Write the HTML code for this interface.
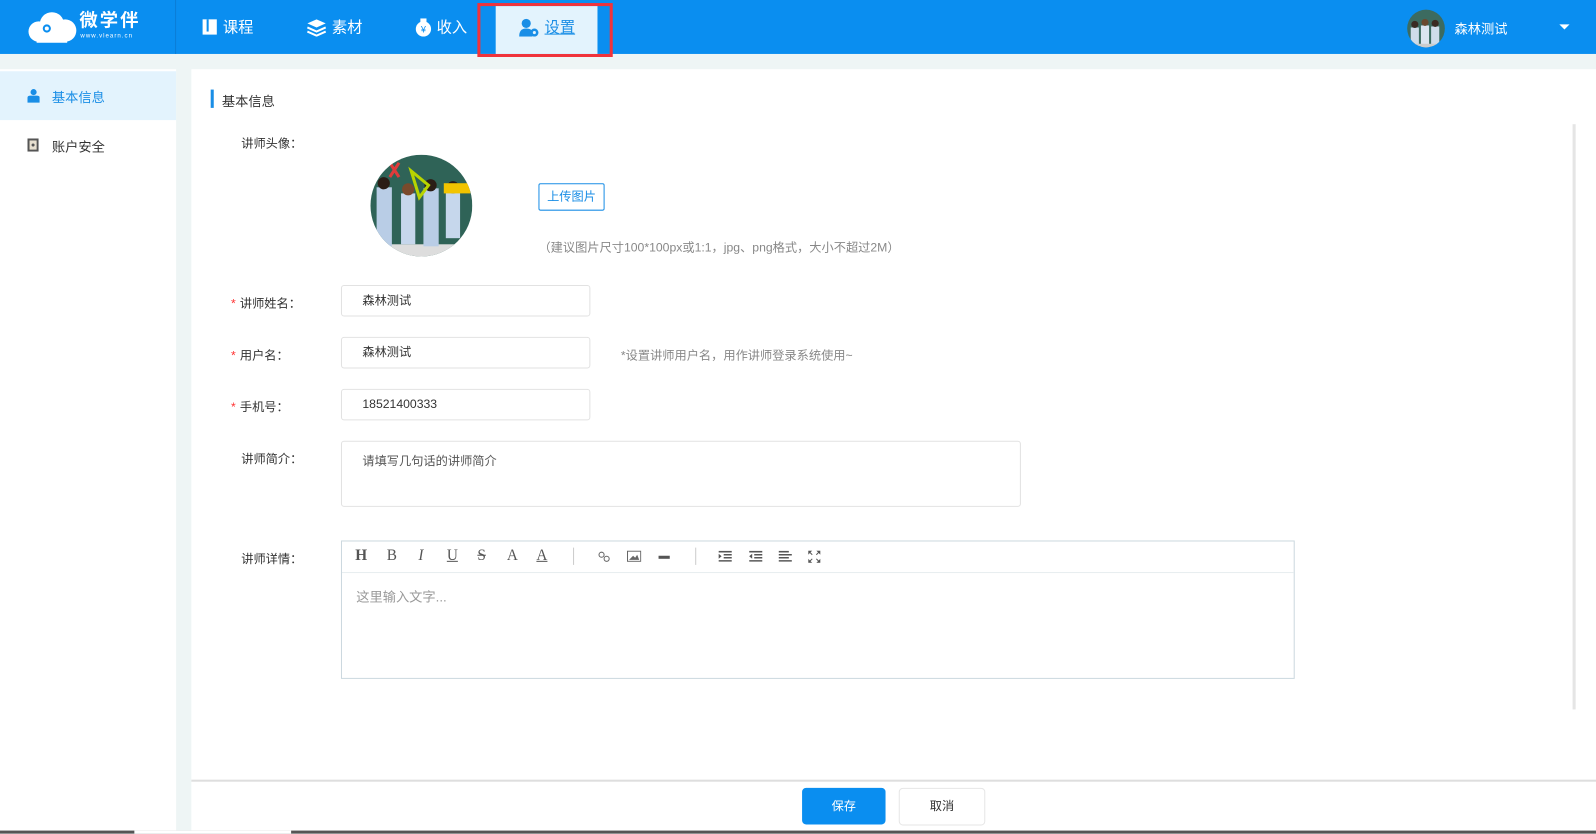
<!DOCTYPE html>
<html><head><meta charset="utf-8"><style>
*{margin:0;padding:0;box-sizing:border-box}
html,body{width:1596px;height:833px;overflow:hidden}
body{background:#eef5f5;font-family:"Liberation Sans","Noto Sans CJK SC",sans-serif;font-size:12px;color:#333}
#w{position:absolute;left:0;top:0;width:1568px;height:819px;transform:scale(1.017857);transform-origin:0 0}
.hdr{position:absolute;left:0;top:0;width:1568px;height:53px;background:#0a8ef0;color:#fff}
.abs{position:absolute}
.nav{position:absolute;top:0;height:53px;display:flex;align-items:center;font-size:15px;color:#fff}
.side{position:absolute;left:0;top:68px;width:173px;height:751px;background:#fff}
.main{position:absolute;left:188px;top:68px;width:1380px;height:751px;background:#fff}
.lbl{position:absolute;font-size:12px;color:#333}
.star{color:#f33;margin-right:4px}
.inp{position:absolute;border:1px solid #e2e2e2;border-radius:3px;background:#fff;padding-left:20px;font-size:12px;color:#333}
.tb{position:absolute;font-family:"Liberation Serif",serif;font-size:15px;color:#555}
</style></head><body><div id="w">
<div class="hdr">
 <svg class="abs" style="left:26px;top:11px" width="50" height="32" viewBox="0 0 50 32"><circle cx="12" cy="20" r="10" fill="#fff"/><circle cx="25" cy="13" r="12" fill="#fff"/><circle cx="38" cy="19" r="11" fill="#fff"/><rect x="10" y="20" width="30" height="11" fill="#fff"/><circle cx="20" cy="17" r="4" fill="#0a8ef0"/><circle cx="20" cy="17" r="2" fill="#fff"/></svg>
 <div class="abs" style="left:78px;top:9px;font-size:18px;font-weight:bold;letter-spacing:2px;line-height:22px">微学伴</div>
 <div class="abs" style="left:79px;top:33px;font-size:6px;letter-spacing:1px;line-height:7px">www.vlearn.cn</div>
 <div class="abs" style="left:172px;top:0;width:1px;height:53px;background:#0b7dd6"></div>
 <div class="nav" style="left:199px"><svg width="16" height="17"><rect x="0" y="1" width="14" height="15" fill="#fff"/><rect x="4" y="1" width="2" height="12" fill="#0a8ef0"/></svg><span style="margin-left:4px">课程</span></div>
 <div class="nav" style="left:301px"><svg width="20" height="18"><path d="M10 1 L19 5 L10 9 L1 5Z" fill="#fff"/><path d="M1 9 L10 13 L19 9" stroke="#fff" stroke-width="2" fill="none"/><path d="M1 13 L10 17 L19 13" stroke="#fff" stroke-width="2" fill="none"/></svg><span style="margin-left:5px">素材</span></div>
 <div class="nav" style="left:407px"><svg width="18" height="18"><circle cx="9" cy="10.5" r="7.5" fill="#fff"/><rect x="6" y="0" width="6" height="4" fill="#fff"/><text x="9" y="14" font-size="9" text-anchor="middle" fill="#0a8ef0">¥</text></svg><span style="margin-left:4px">收入</span></div>
 <div class="abs" style="left:469px;top:3px;width:133px;height:53px;border:3px solid #f0333b"></div>
 <div class="abs" style="left:487px;top:6px;width:100px;height:47px;background:#e3f3fd"></div>
 <div class="nav" style="left:510px;color:#1a8ee6"><svg width="20" height="18"><circle cx="7" cy="5" r="4.5" fill="#1a8ee6"/><path d="M0 18 Q0 10 7 10 Q12 10 13 13 L13 18Z" fill="#1a8ee6"/><circle cx="15" cy="14" r="4" fill="#1a8ee6"/><circle cx="15" cy="14" r="1.5" fill="#e3f3fd"/></svg><span style="margin-left:5px;text-decoration:underline">设置</span></div>
 <svg class="abs" style="left:1382px;top:9px" width="38" height="38"><defs><clipPath id="c1"><circle cx="19" cy="19" r="18.5"/></clipPath></defs><g clip-path="url(#c1)"><rect width="38" height="38" fill="#3c6b60"/><rect x="4" y="18" width="8" height="20" fill="#cfdcea"/><rect x="14" y="16" width="8" height="22" fill="#dbe5f0"/><rect x="24" y="17" width="8" height="21" fill="#cfdcea"/><circle cx="8" cy="15" r="3.5" fill="#3a2a22"/><circle cx="18" cy="13" r="3.5" fill="#6a4a30"/><circle cx="28" cy="14" r="3.5" fill="#3a2a22"/><rect x="0" y="34" width="38" height="4" fill="#ccc"/></g></svg>
 <div class="abs" style="left:1429px;top:18px;font-size:13px">森林测试</div>
 <div class="abs" style="left:1532px;top:24px;width:0;height:0;border-left:5px solid transparent;border-right:5px solid transparent;border-top:5px solid #fff"></div>
 <div class="abs" style="left:1580px;top:0;width:1px;height:50px;background:#0b7dd6"></div>
</div>
<div class="side">
 <div class="abs" style="left:0;top:2px;width:173px;height:48px;background:#e3f3fd"></div>
 <svg class="abs" style="left:27px;top:19px" width="12" height="14"><circle cx="6" cy="3.5" r="3" fill="#1a8ee6"/><path d="M0 14 L0 9 Q0 7 3 7 L9 7 Q12 7 12 9 L12 14Z" fill="#1a8ee6"/></svg>
 <div class="abs" style="left:51px;top:17px;font-size:13px;color:#1a8ee6">基本信息</div>
 <svg class="abs" style="left:27px;top:68px" width="11" height="13"><rect width="11" height="13" fill="#555"/><rect x="2" y="2" width="7" height="9" fill="#e8e0d0"/><circle cx="5.5" cy="6.5" r="1.5" fill="#555"/></svg>
 <div class="abs" style="left:51px;top:66px;font-size:13px;color:#333">账户安全</div>
</div>
<div class="main">
 <div class="abs" style="left:19px;top:20px;width:3px;height:18px;background:#1a8ee6"></div>
 <div class="abs" style="left:30px;top:21px;font-size:13px;color:#333">基本信息</div>
 <div class="abs" style="left:1357px;top:54px;width:3px;height:575px;background:#e5e5e5"></div>
 <div class="lbl" style="left:49px;top:64px">讲师头像：</div>
 <svg class="abs" style="left:176px;top:84px" width="100" height="100"><defs><clipPath id="c2"><circle cx="50" cy="50" r="50"/></clipPath></defs><g clip-path="url(#c2)"><rect width="100" height="100" fill="#2f6357"/><rect y="88" width="100" height="12" fill="#ddd"/><rect x="6" y="32" width="15" height="58" fill="#b9cde6"/><rect x="30" y="38" width="14" height="50" fill="#c6d7ec"/><rect x="52" y="33" width="15" height="57" fill="#b9cde6"/><rect x="74" y="36" width="14" height="46" fill="#c6d7ec"/><circle cx="13" cy="28" r="6" fill="#2b1d16"/><circle cx="37" cy="34" r="6" fill="#7a4a2c"/><circle cx="59" cy="30" r="6" fill="#2b1d16"/><circle cx="81" cy="32" r="6" fill="#2b1d16"/><path d="M19 8 L28 22 M28 8 L19 22" stroke="#e03b3b" stroke-width="3"/><path d="M40 16 L48 42 L57 30Z" stroke="#b8d400" stroke-width="3" fill="none"/><rect x="72" y="28" width="26" height="10" fill="#f2c400"/></g></svg>
 <div class="abs" style="left:341px;top:112px;width:65px;height:27px;border:1px solid #1a8ee6;border-radius:2px;color:#1a8ee6;font-size:12px;text-align:center;line-height:25px">上传图片</div>
 <div class="abs" style="left:341px;top:166px;font-size:12px;color:#888">（建议图片尺寸100*100px或1:1，jpg、png格式，大小不超过2M）</div>
 <div class="lbl" style="left:39px;top:221px"><span class="star">*</span>讲师姓名：</div>
 <div class="inp" style="left:147px;top:212px;width:245px;height:31px;line-height:29px">森林测试</div>
 <div class="lbl" style="left:39px;top:272px"><span class="star">*</span>用户名：</div>
 <div class="inp" style="left:147px;top:263px;width:245px;height:31px;line-height:29px">森林测试</div>
 <div class="abs" style="left:422px;top:272px;font-size:12px;color:#888">*设置讲师用户名，用作讲师登录系统使用~</div>
 <div class="lbl" style="left:39px;top:323px"><span class="star">*</span>手机号：</div>
 <div class="inp" style="left:147px;top:314px;width:245px;height:31px;line-height:29px">18521400333</div>
 <div class="lbl" style="left:49px;top:374px">讲师简介：</div>
 <div class="inp" style="left:147px;top:365px;width:668px;height:65px;padding-top:10px;color:#555">请填写几句话的讲师简介</div>
 <div class="lbl" style="left:49px;top:472px">讲师详情：</div>
 <div class="abs" style="left:147px;top:463px;width:937px;height:136px;border:1px solid #ccd8df">
  <div class="abs" style="left:0;top:30px;width:935px;height:1px;background:#e8eef0"></div>
  <span class="tb" style="left:13px;top:6px;font-weight:bold">H</span>
  <span class="tb" style="left:44px;top:6px">B</span>
  <span class="tb" style="left:75px;top:6px;font-style:italic">I</span>
  <span class="tb" style="left:103px;top:6px;text-decoration:underline">U</span>
  <span class="tb" style="left:133px;top:6px;text-decoration:line-through">S</span>
  <span class="tb" style="left:162px;top:6px">A</span>
  <span class="tb" style="left:191px;top:6px;text-decoration:underline">A</span>
  <div class="abs" style="left:227px;top:6px;width:1px;height:17px;background:#ccc"></div>
  <svg class="abs" style="left:251px;top:9px" width="13" height="12"><circle cx="4" cy="4" r="2.5" stroke="#666" fill="none"/><circle cx="9" cy="8" r="2.5" stroke="#666" fill="none"/></svg>
  <svg class="abs" style="left:280px;top:9px" width="14" height="11"><rect x=".5" y=".5" width="13" height="10" stroke="#666" fill="none"/><path d="M2 9 L6 5 L8 7 L10 4 L12 9Z" fill="#666"/></svg>
  <div class="abs" style="left:311px;top:14px;width:11px;height:3px;background:#555"></div>
  <div class="abs" style="left:347px;top:6px;width:1px;height:17px;background:#ccc"></div>
  <svg class="abs" style="left:370px;top:9px" width="13" height="11"><path d="M0 1h13M5 4h8M5 7h8M0 10h13" stroke="#555" stroke-width="1.5"/><path d="M0 3 L3 5.5 L0 8Z" fill="#555"/></svg>
  <svg class="abs" style="left:400px;top:9px" width="13" height="11"><path d="M0 1h13M5 4h8M5 7h8M0 10h13" stroke="#555" stroke-width="1.5"/><path d="M3 3 L0 5.5 L3 8Z" fill="#555"/></svg>
  <svg class="abs" style="left:429px;top:9px" width="13" height="11"><path d="M0 1h10M0 4h13M0 7h10M0 10h13" stroke="#555" stroke-width="1.5"/></svg>
  <svg class="abs" style="left:458px;top:9px" width="12" height="12"><path d="M0 0h4L0 4ZM12 0h-4L12 4ZM0 12h4L0 8ZM12 12h-4L12 8Z" fill="#555"/><path d="M1 1l3 3M11 1l-3 3M1 11l3-3M11 11l-3-3" stroke="#555"/></svg>
  <div class="abs" style="left:14px;top:44px;font-size:13px;color:#999">这里输入文字...</div>
 </div>
 <div class="abs" style="left:0;top:698px;width:1380px;height:2px;background:#dedede"></div>
 <div class="abs" style="left:600px;top:706px;width:82px;height:36px;background:#0a8ef0;border-radius:4px;color:#fff;text-align:center;line-height:36px">保存</div>
 <div class="abs" style="left:695px;top:706px;width:85px;height:37px;border:1px solid #e6e6e6;border-radius:4px;color:#333;text-align:center;line-height:35px">取消</div>
</div>
<div class="abs" style="left:0;top:816px;width:1568px;height:3px;background:#555"></div>
<div class="abs" style="left:132px;top:816px;width:154px;height:3px;background:#fff"></div>
</div></body></html>
